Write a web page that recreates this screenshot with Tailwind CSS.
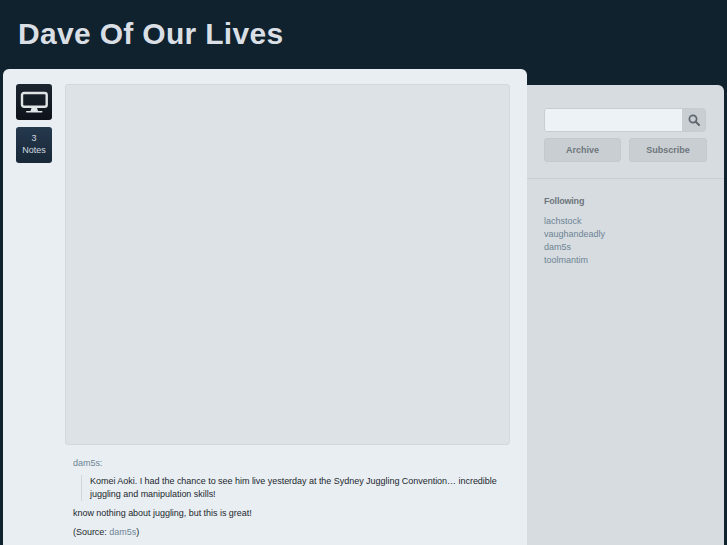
<!DOCTYPE html>
<html lang="en">
<head>
    <meta charset="UTF-8">
    <meta name="viewport" content="width=device-width, initial-scale=1.0">
    <title>Dave Of Our Lives</title>
    <script src="https://cdn.jsdelivr.net/npm/@tailwindcss/browser@4"></script>
</head>
<body class="bg-[#10222d] h-[545px] overflow-hidden font-['Liberation_Sans',Arial,sans-serif]">

    <!-- Header -->
    <header class="h-[69px] pl-[18px] pt-[15px]">
        <h1 class="text-[30px] leading-[38px] font-bold text-[#d9dfe4] tracking-[0.32px]">Dave Of Our Lives</h1>
    </header>

    <div class="flex pl-[3px] items-start">
        <!-- Post -->
        <main class="w-[524px] h-[476px] bg-[#e9eef2] rounded-t-[6px] flex pl-[13px] pt-[15px] shrink-0">
            <div class="w-[36px] flex flex-col gap-[7px] shrink-0">
                <div class="h-[36px] rounded-[3px] bg-gradient-to-b from-[#1b2530] to-[#0e131a] flex items-center justify-center">
                    <svg width="30" height="26" viewBox="0 0 30 26" fill="none">
                        <rect x="3" y="4" width="24.7" height="13.7" rx="2" stroke="#e0e4e6" stroke-width="2.4"/>
                        <path d="M12.5 19h5.5l1 3h-7.5z" fill="#e0e4e6"/>
                        <rect x="7" y="22" width="16.5" height="1.5" rx=".7" fill="#e0e4e6"/>
                    </svg>
                </div>
                <a class="h-[36px] pb-[2px] rounded-[3px] bg-gradient-to-b from-[#25394d] to-[#182838] text-[#d3dae0] text-[9px] leading-[12px] flex flex-col items-center justify-center">
                    <span>3</span>
                    <span>Notes</span>
                </a>
            </div>
            <div class="w-[445px] ml-[13px] shrink-0">
                <div class="h-[361px] bg-[#dde2e6] border border-[#d2d8dc] rounded-[3px]"></div>
                <div class="text-[9px] leading-[13px] tracking-[-0.03px] text-[#22282e]">
                    <p class="mt-[12px] pl-[8px] text-[#6d8494]">dam5s:</p>
                    <blockquote class="mt-[5px] ml-[16px] pl-[8px] border-l border-[#d0d6da]">Komei Aoki. I had the chance to see him live yesterday at the Sydney Juggling Convention… incredible juggling and manipulation skills!</blockquote>
                    <p class="mt-[6px] pl-[8px]">know nothing about juggling, but this is great!</p>
                    <p class="mt-[6px] pl-[8px]">(Source: <a class="text-[#6d8494]">dam5s</a>)</p>
                </div>
            </div>
        </main>

        <!-- Sidebar -->
        <aside class="w-[197px] h-[460px] mt-[16px] bg-[#d7dce0] rounded-tr-[6px] shrink-0">
            <div class="px-[17px] pt-[23px] pb-[16px] border-b border-[#c8ced2]">
                <div class="flex h-[24px] w-[162px] rounded-[3px] border border-[#c6ccd0] overflow-hidden">
                    <input type="text" class="flex-1 min-w-0 bg-[#edf2f6]">
                    <button class="w-[23px] bg-[#c9ced2] flex items-center justify-center">
                        <svg width="12" height="12" viewBox="0 0 12 12" fill="none">
                            <circle cx="5" cy="5" r="3.6" stroke="#60686f" stroke-width="1.7"/>
                            <path d="M7.8 7.8 11 11" stroke="#60686f" stroke-width="2" stroke-linecap="round"/>
                        </svg>
                    </button>
                </div>
                <div class="flex gap-[8px] mt-[6px]">
                    <a class="w-[77px] h-[24px] pt-[1px] rounded-[3px] bg-[#c9ced2] border border-[#c3c9cd] text-[#6e767d] text-[9px] font-bold flex items-center justify-center">Archive</a>
                    <a class="w-[78px] h-[24px] pt-[1px] rounded-[3px] bg-[#c9ced2] border border-[#c3c9cd] text-[#6e767d] text-[9px] font-bold flex items-center justify-center">Subscribe</a>
                </div>
            </div>
            <div class="px-[17px] pt-[16px] text-[9px]">
                <h2 class="font-bold text-[#6e767d] leading-[12px] tracking-[-0.2px]">Following</h2>
                <ul class="mt-[8px] text-[#6d8494] leading-[13px]">
                    <li>lachstock</li>
                    <li>vaughandeadly</li>
                    <li>dam5s</li>
                    <li>toolmantim</li>
                </ul>
            </div>
        </aside>
    </div>

</body>
</html>
